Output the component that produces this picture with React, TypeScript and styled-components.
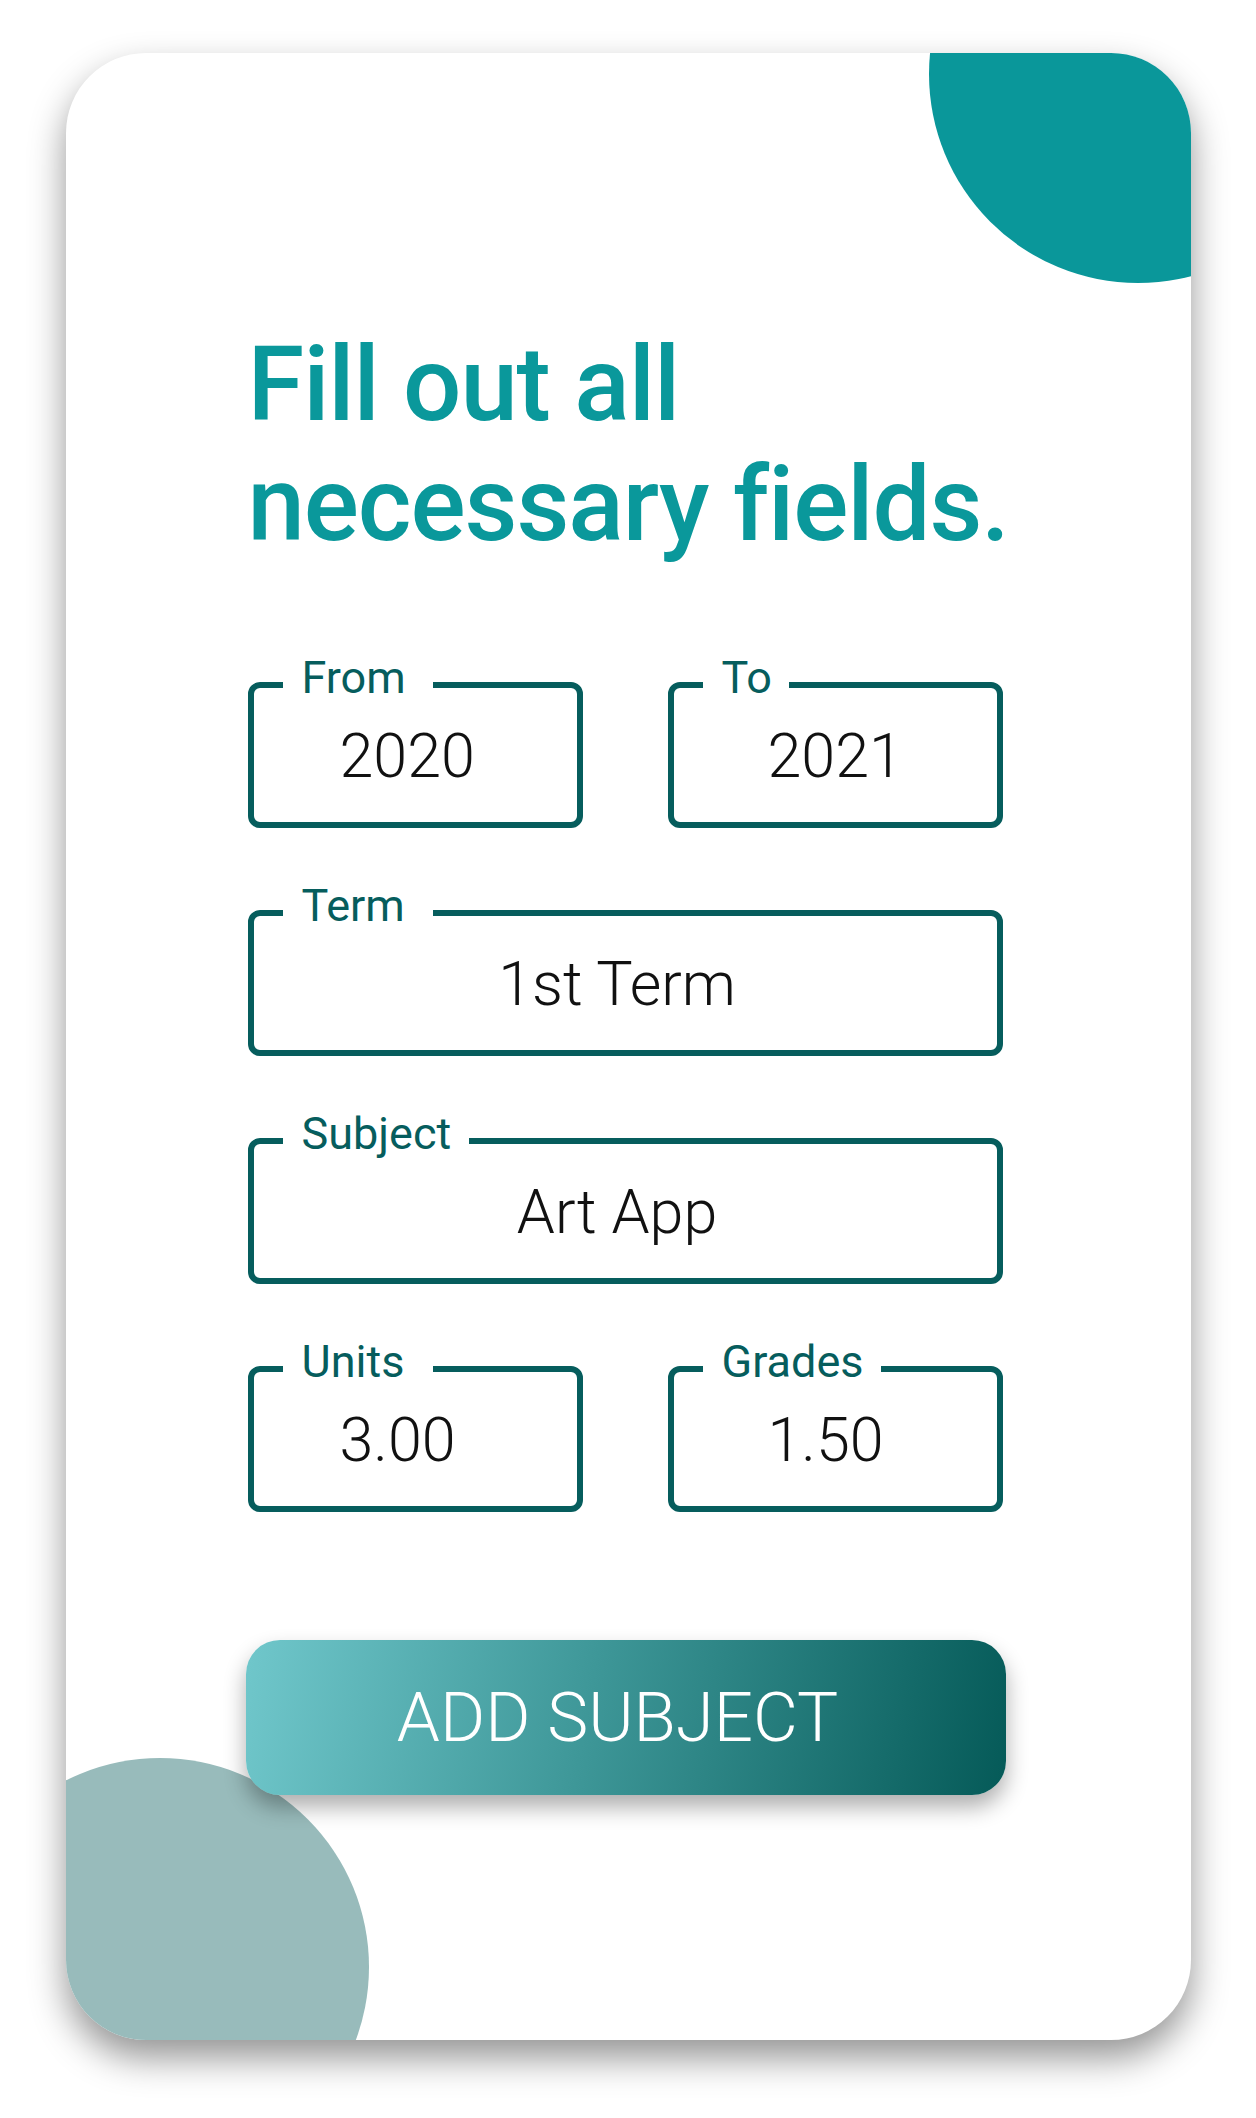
import React from 'react';
import styled, { createGlobalStyle } from 'styled-components';

const GlobalStyle = createGlobalStyle`
  body {
    margin: 0;
    background: #ffffff;
    font-family: Roboto, "Liberation Sans", sans-serif;
  }
`

type FieldProps = { label: string; value: string; gapWidth: number; indent?: number }

function Field(props: FieldProps) {
  return (
    <Box>
      <Label $w={props.gapWidth}>{props.label}</Label>
      <Value $indent={props.indent}>{props.value}</Value>
    </Box>
  )
}

export default function App() {
  return (
    <Page>
      <GlobalStyle />
      <Card>
        <Blob $spot="top" />
        <Blob $spot="bottom" />

        <Heading>Fill out all<br />necessary fields.</Heading>

        <Form>
          <Row>
            <Field label="From" value="2020" gapWidth={150} indent={86} />
            <Field label="To" value="2021" gapWidth={86} indent={94} />
          </Row>
          <Field label="Term" value="1st Term" gapWidth={150} />
          <Field label="Subject" value="Art App" gapWidth={186} />
          <Row>
            <Field label="Units" value="3.00" gapWidth={150} indent={86} />
            <Field label="Grades" value="1.50" gapWidth={178} indent={94} />
          </Row>
        </Form>

        <AddButton>ADD SUBJECT</AddButton>
      </Card>
    </Page>
  )
}

const Page = styled.div`
  display: flex;
  justify-content: center;
  padding-top: 53px;
  padding-bottom: 78px;
`

const Card = styled.div`
  position: relative;
  box-sizing: border-box;
  width: 1125px;
  height: 1987px;
  padding: 272px 188px 0 182px;
  display: flex;
  flex-direction: column;
  background: #ffffff;
  border-radius: 80px;
  overflow: hidden;
  box-shadow: 0 18px 36px rgba(0, 0, 0, 0.42);
`

const Blob = styled.div<{ $spot: 'top' | 'bottom' }>`
  position: absolute;
  width: 418px;
  height: 418px;
  border-radius: 50%;
  background: ${p => (p.$spot === 'top' ? '#0a979a' : '#98bbbb')};
  ${p => (p.$spot === 'top'
    ? 'left: 863px; top: -188px;'
    : 'left: -115px; top: 1705px;')}
`

const Heading = styled.h1`
  margin: 0;
  font-size: 103px;
  line-height: 120px;
  font-weight: 500;
  letter-spacing: -1.1px;
  white-space: nowrap;
  color: #0a989b;
`

const Form = styled.div`
  display: flex;
  flex-direction: column;
  gap: 57px;
  margin-top: 92px;
`

const Row = styled.div`
  display: grid;
  grid-template-columns: 1fr 1fr;
  column-gap: 85px;
`

const Box = styled.fieldset`
  margin: 0;
  min-width: 0;
  padding: 14px 0 37px;
  border: 6px solid #065d5d;
  border-radius: 12px;
`

const Label = styled.legend<{ $w: number }>`
  box-sizing: border-box;
  width: ${p => p.$w}px;
  margin-left: 29px;
  padding: 0 0 14px 19px;
  font-size: 45px;
  line-height: 42px;
  font-weight: 400;
  white-space: nowrap;
  color: #065d5d;
`

const Value = styled.div<{ $indent?: number }>`
  font-size: 61px;
  line-height: 58px;
  font-weight: 300;
  color: #111111;
  text-align: ${p => (p.$indent === undefined ? 'center' : 'left')};
  padding: ${p => (p.$indent === undefined ? '0 16px 0 0' : `0 0 0 ${p.$indent}px`)};
`

const AddButton = styled.button`
  position: relative;
  z-index: 1;
  height: 155px;
  margin: 128px -3px 0 -2px;
  border: none;
  border-radius: 34px;
  background: linear-gradient(100deg, #70c7cb 0%, #3e9798 45%, #055a58 100%);
  box-shadow: 0 12px 22px rgba(0, 0, 0, 0.32);
  color: #ffffff;
  font-family: Roboto, "Liberation Sans", sans-serif;
  font-size: 69px;
  font-weight: 300;
  padding: 0 16px 0 0;
`
